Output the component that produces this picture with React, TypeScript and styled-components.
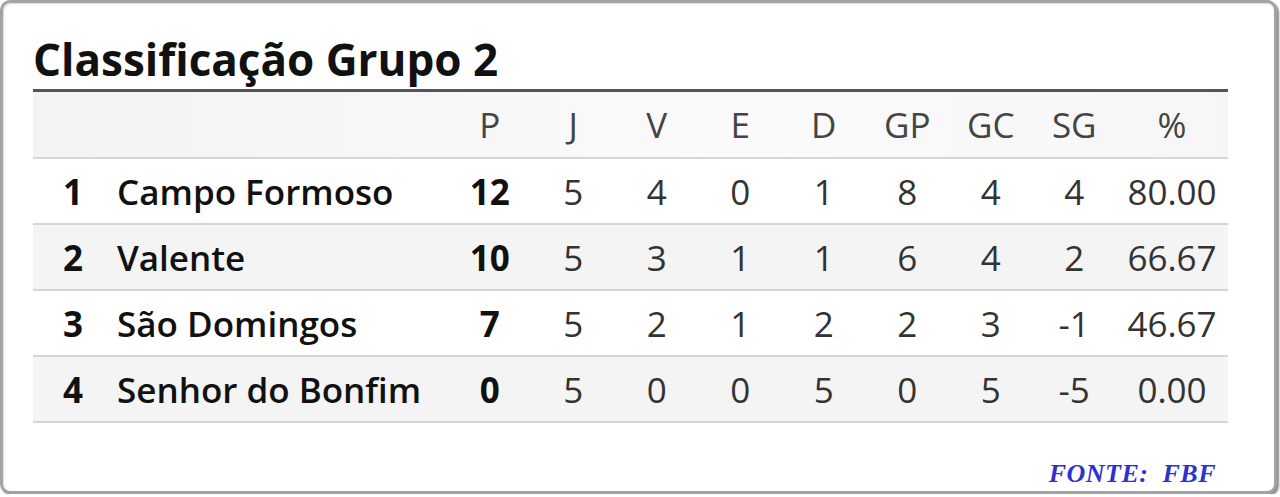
import React from "react";
import styled, { createGlobalStyle } from "styled-components";

const GlobalStyle = createGlobalStyle`
  html, body {
    margin: 0;
    padding: 0;
    background: #ffffff;
  }
`;

const Frame = styled.div`
  box-sizing: border-box;
  width: 1277px;
  height: 494px;
  border: 3px solid #a3a3a3;
  border-radius: 10px;
  box-shadow: 2px 2px 2px rgba(0, 0, 0, 0.45), inset 1px 1px 2px rgba(0, 0, 0, 0.15);
  background: #ffffff;
  padding: 26px 0 0 30px;
  display: flex;
  flex-direction: column;
`;

const Title = styled.h1`
  margin: 0;
  font-family: "Open Sans", sans-serif;
  font-weight: 700;
  font-size: 44px;
  line-height: 60px;
  color: #111111;
`;

const Table = styled.table`
  width: 1195px;
  border-collapse: collapse;
  border-top: 3px solid #555555;
  font-family: "Open Sans", sans-serif;
  font-stretch: 96%;
  font-size: 35px;
  color: #333333;
`;

const HeadRow = styled.tr`
  background: linear-gradient(to right, #f3f3f3, #fafafa 60%, #f6f6f6);
  border-bottom: 2px solid #d6d6d6;
`;

const Row = styled.tr<{ $shaded: boolean }>`
  background: ${({ $shaded }) => ($shaded ? "#f4f4f4" : "#ffffff")};
  border-bottom: 2px solid #d6d6d6;
`;

const HeadCell = styled.th<{ $w: number }>`
  width: ${({ $w }) => $w}px;
  height: 65px;
  padding: 0;
  font-weight: 400;
  color: #444444;
  text-align: center;
`;

const Cell = styled.td<{ $bold?: boolean }>`
  height: 64px;
  padding: 0;
  text-align: center;
  font-weight: ${({ $bold }) => ($bold ? 700 : 400)};
  color: ${({ $bold }) => ($bold ? "#111111" : "#333333")};
`;

const NameCell = styled.td`
  padding: 0 0 0 4px;
  text-align: left;
  font-weight: 600;
  color: #111111;
  white-space: nowrap;
`;

const Footer = styled.div`
  width: 1183px;
  margin-top: 36px;
  text-align: right;
  font-family: "Liberation Serif", serif;
  font-weight: 700;
  font-style: italic;
  font-size: 26px;
  color: #3030d0;
  letter-spacing: 0.5px;
`;

type Team = {
  pos: number;
  name: string;
  stats: string[];
  pct: string;
};

const teams: Team[] = [
  { pos: 1, name: "Campo Formoso", stats: ["12", "5", "4", "0", "1", "8", "4", "4"], pct: "80.00" },
  { pos: 2, name: "Valente", stats: ["10", "5", "3", "1", "1", "6", "4", "2"], pct: "66.67" },
  { pos: 3, name: "São Domingos", stats: ["7", "5", "2", "1", "2", "2", "3", "-1"], pct: "46.67" },
  { pos: 4, name: "Senhor do Bonfim", stats: ["0", "5", "0", "0", "5", "0", "5", "-5"], pct: "0.00" },
];

const columns = ["P", "J", "V", "E", "D", "GP", "GC", "SG"];

export default function App(): React.ReactElement {
  return (
    <>
      <GlobalStyle />
      <Frame>
        <Title>Classificação Grupo 2</Title>
        <Table>
          <thead>
            <HeadRow>
              <HeadCell $w={80} />
              <HeadCell $w={335} />
              {columns.map((c) => (
                <HeadCell key={c} $w={83.5}>
                  {c}
                </HeadCell>
              ))}
              <HeadCell $w={112}>%</HeadCell>
            </HeadRow>
          </thead>
          <tbody>
            {teams.map((t, i) => (
              <Row key={t.pos} $shaded={i % 2 === 1}>
                <Cell $bold>{t.pos}</Cell>
                <NameCell>{t.name}</NameCell>
                {t.stats.map((s, j) => (
                  <Cell key={j} $bold={j === 0}>
                    {s}
                  </Cell>
                ))}
                <Cell>{t.pct}</Cell>
              </Row>
            ))}
          </tbody>
        </Table>
        <Footer>FONTE:&nbsp; FBF</Footer>
      </Frame>
    </>
  );
}
